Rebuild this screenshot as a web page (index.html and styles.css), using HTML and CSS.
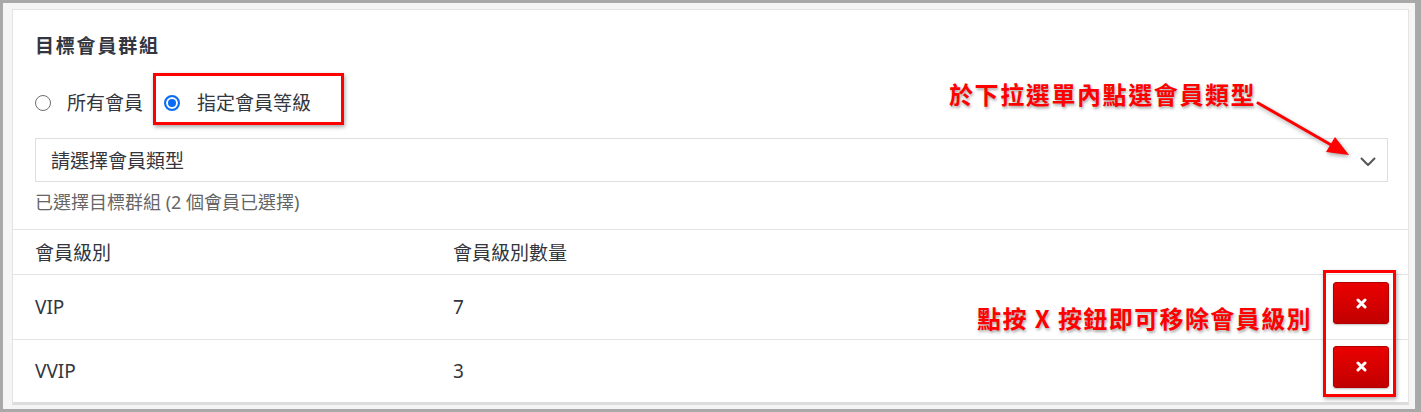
FILE: index.html
```html
<!DOCTYPE html>
<html lang="zh-Hant">
<head>
<meta charset="utf-8">
<title>目標會員群組</title>
<link rel="stylesheet" href="styles.css">
</head>
<body>
<div class="frame">
  <div class="card">
    <section class="form">
      <h2 class="title">目標會員群組</h2>
      <div class="radios">
        <label class="radio"><span class="dot"></span><span class="radio-text">所有會員</span></label>
        <label class="radio checked"><span class="dot"></span><span class="radio-text">指定會員等級</span></label>
      </div>
      <div class="select">
        <span class="select-text">請選擇會員類型</span>
        <svg class="chevron" width="16" height="10" viewBox="0 0 16 10"><path d="M1.5 1.5 L8 8 L14.5 1.5" fill="none" stroke="#555" stroke-width="2" stroke-linecap="round" stroke-linejoin="round"/></svg>
      </div>
      <p class="hint">已選擇目標群組 (2 個會員已選擇)</p>
    </section>
    <table class="tiers">
      <thead>
        <tr><th class="c1">會員級別</th><th class="c2">會員級別數量</th><th class="c3"></th></tr>
      </thead>
      <tbody>
        <tr><td class="c1">VIP</td><td class="c2">7</td><td class="c3"><button class="del"><svg width="11" height="11" viewBox="0 0 11 11"><path d="M2 2 L9 9 M9 2 L2 9" stroke="#fff" stroke-width="3" stroke-linecap="round"/></svg></button></td></tr>
        <tr><td class="c1">VVIP</td><td class="c2">3</td><td class="c3"><button class="del"><svg width="11" height="11" viewBox="0 0 11 11"><path d="M2 2 L9 9 M9 2 L2 9" stroke="#fff" stroke-width="3" stroke-linecap="round"/></svg></button></td></tr>
      </tbody>
    </table>
  </div>

  <div class="mark mark-radio"></div>
  <div class="mark mark-buttons"></div>
  <div class="note note-select">於下拉選單內點選會員類型</div>
  <div class="note note-remove">點按 X 按鈕即可移除會員級別</div>
  <svg class="arrow" width="120" height="80" viewBox="1250 90 120 80">
    <line x1="1258" y1="103" x2="1333" y2="146" stroke="#f00" stroke-width="3" stroke-linecap="round"/>
    <polygon points="1349,155 1326,152 1335,137" fill="#f00"/>
  </svg>
</div>
</body>
</html>
```

FILE: styles.css
```css
* { box-sizing: border-box; }
html, body { margin: 0; padding: 0; }
body {
  font-family: "Noto Sans", "Noto Sans CJK TC", sans-serif;
  color: #33363d;
  background: #a9a9a9;
}
.frame {
  position: relative;
  width: 1421px;
  height: 412px;
  border-style: solid;
  border-color: #a9a9a9;
  border-width: 3px 6px 3px 3px;
  background: #f5f5f5;
  padding: 6px 6px 4px 9px;
}
.card {
  height: 396px;
  background: #fff;
  border: 1px solid #e4e4e4;
  border-bottom: 3px solid #dcdcdc;
}
.form {
  padding: 22px 20px 15px 22px;
}
.title {
  margin: 0;
  font-size: 19px;
  line-height: 28px;
  font-weight: 700;
  letter-spacing: 1.8px;
  color: #333640;
}
.radios {
  display: flex;
  align-items: center;
  height: 28px;
  margin-top: 29px;
}
.radio {
  display: flex;
  align-items: center;
  font-size: 19px;
  line-height: 28px;
  margin-right: 21px;
}
.dot {
  width: 16px;
  height: 16px;
  border-radius: 50%;
  border: 1.5px solid #6f6f6f;
  background: #fff;
  margin-right: 16px;
}
.checked .dot {
  border: 2px solid #0a6cf5;
  box-shadow: inset 0 0 0 2px #fff, inset 0 0 0 8px #0a6cf5;
}
.checked .radio-text { margin-left: 1px; }
.select {
  margin-top: 21px;
  height: 44px;
  border: 1px solid #dedede;
  display: flex;
  align-items: center;
  justify-content: space-between;
  padding: 0 11px 0 15px;
  font-size: 19px;
}
.chevron { margin-top: 4px; }
.hint {
  margin: 8px 0 0;
  font-size: 18px;
  line-height: 24px;
  color: #666;
}
.tiers {
  width: 100%;
  border-collapse: collapse;
  font-size: 19px;
}
.tiers th, .tiers td {
  text-align: left;
  font-weight: 400;
  padding: 0;
  vertical-align: middle;
}
.tiers thead tr { height: 45px; border-top: 1px solid #e4e4e4; border-bottom: 1px solid #e4e4e4; }
.tiers tbody tr { height: 65px; border-bottom: 1px solid #e4e4e4; }
.tiers tbody tr:last-child { border-bottom: 0; height: 62px; }
.tiers .c1 { width: 440px; padding-left: 22px; }
.tiers .c3 { text-align: right; padding-right: 19px; }
.del {
  width: 56px;
  height: 42px;
  margin-bottom: 8px;
  border: 1px solid #b00000;
  border-radius: 3px;
  background: linear-gradient(#ea0000, #c20000);
  box-shadow: 0 1px 2px rgba(0,0,0,0.25);
  display: inline-flex;
  align-items: center;
  justify-content: center;
  padding: 0;
}
.mark {
  position: absolute;
  border: 3px solid #f00;
  box-shadow: 1px 2px 4px rgba(0,0,0,0.35);
}
.mark-radio { left: 150px; top: 70px; width: 191px; height: 52px; }
.mark-buttons { left: 1320px; top: 267px; width: 73px; height: 127px; }
.note {
  position: absolute;
  font-family: "Noto Sans CJK TC", sans-serif;
  font-weight: 700;
  font-size: 24px;
  line-height: 30px;
  letter-spacing: 1.6px;
  color: #f00;
  text-shadow: 1px 2px 3px rgba(0,0,0,0.35);
  white-space: nowrap;
}
.note-select { left: 946px; top: 76px; }
.note-remove { left: 974px; top: 300px; letter-spacing: 1.4px; }
.arrow {
  position: absolute;
  left: 1247px;
  top: 87px;
  filter: drop-shadow(1px 2px 2px rgba(0,0,0,0.35));
}
```
